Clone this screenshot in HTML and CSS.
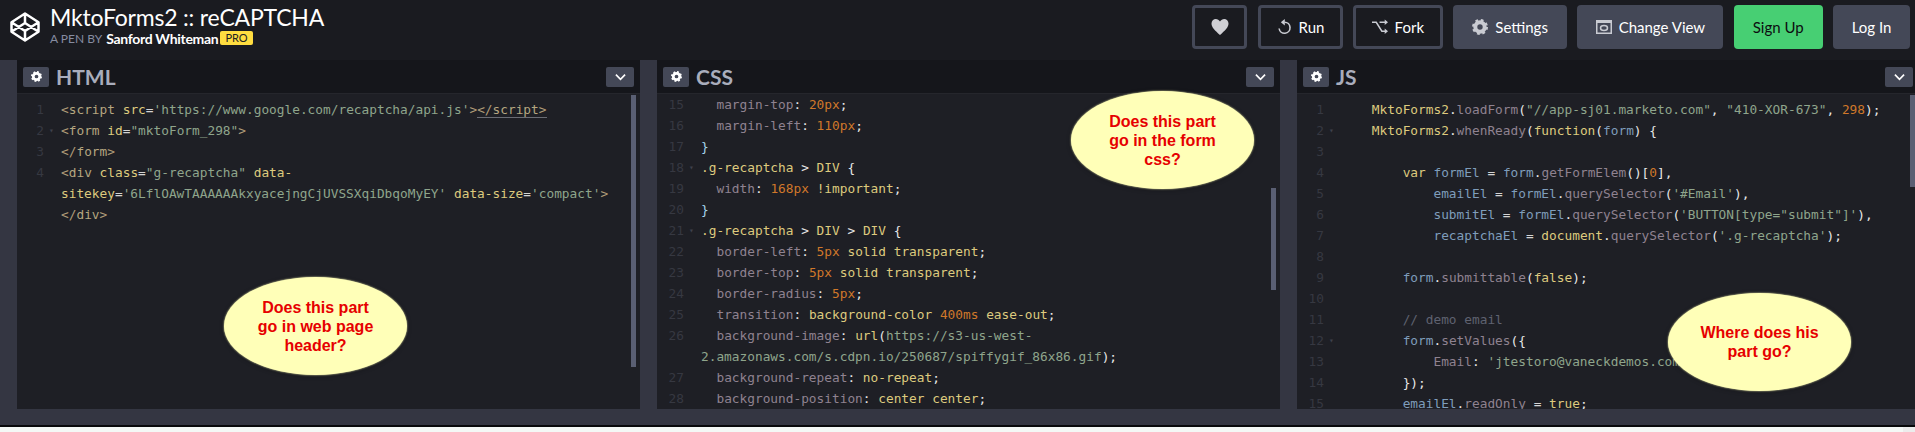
FILE: index.html
```html
<!DOCTYPE html>
<html lang="en">
<head>
<meta charset="utf-8">
<title>MktoForms2 :: reCAPTCHA</title>
<link rel="stylesheet" href="styles.css">
</head>
<body>
<div class="page">
<header class="topbar">
  <div class="brand">
    <svg class="logo" viewBox="0 0 30 30" aria-hidden="true"><path d="M15 1.500 28.500 10.200v9.600L15 28.500 1.500 19.800v-9.600zM1.500 10.200 15 19l13.500-8.800M1.500 19.800 15 11l13.500 8.800M15 1.500V11M15 19v9.500"/></svg>
    <div class="brand-text">
      <h1 class="pen-title">MktoForms2 :: reCAPTCHA</h1>
      <div class="pen-by"><span class="pen-label">A PEN BY</span> <span class="pen-author">Sanford Whiteman</span><span class="pro">PRO</span></div>
    </div>
  </div>
  <nav class="actions">
    <button class="btn btn-outline btn-heart"><svg class="ico ico-heart" viewBox="0 0 18 18"><path d="M9 17C4 12.500.5 9.500.5 5.500.5 2.800 2.500 1 4.800 1 6.500 1 8 1.900 9 3.500 10 1.900 11.500 1 13.200 1c2.300 0 4.300 1.800 4.300 4.500C17.500 9.500 14 12.500 9 17z"/></svg></button>
    <button class="btn btn-outline btn-run"><svg class="ico ico-line" viewBox="0 0 16 16"><path d="M8.500 3.200a5.500 5.500 0 1 1-5.400 6.300"/><path class="fill" d="M8.800 0v6.400L4.800 3.200z"/></svg>Run</button>
    <button class="btn btn-outline btn-fork"><svg class="ico ico-line" viewBox="0 0 17 16"><path d="M0 3h4.500l6 9.500H14M8 3h6"/><path class="fill" d="M13.500 0 17 3l-3.500 3zM13.500 9.500l3.500 3-3.500 3z"/></svg>Fork</button>
    <button class="btn btn-solid btn-settings"><svg class="ico ico-gear" viewBox="0 0 16 16"><circle class="gear-ring" cx="8" cy="8" r="4.700"/><circle class="gear-teeth" cx="8" cy="8" r="6.500"/></svg>Settings</button>
    <button class="btn btn-solid btn-view"><svg class="ico ico-view" viewBox="0 0 16 16"><path class="fill" d="M0 1h16v3H0z"/><rect x=".75" y="1.750" width="14.500" height="12.500"/><ellipse cx="8" cy="9" rx="3.500" ry="2.500"/></svg>Change View</button>
    <button class="btn btn-green btn-signup">Sign Up</button>
    <button class="btn btn-solid btn-login">Log In</button>
  </nav>
</header>

<main class="editors">
  <section class="pane">
    <div class="pane-head">
      <span class="pane-gear"><svg class="mini-gear" viewBox="0 0 16 16"><circle class="gear-ring" cx="8" cy="8" r="4.700"/><circle class="gear-teeth" cx="8" cy="8" r="6.500"/></svg></span>
      <h2 class="pane-title">HTML</h2>
      <span class="pane-toggle"><svg class="chev" viewBox="0 0 12 8"><path d="M1 1.500 6 6.500 11 1.500"/></svg></span>
    </div>
    <div class="code pad-html">
      <div class="scroll scroll-html"></div>
      <div class="ln"><span class="no">1</span><span class="tx"><i class="ang">&lt;</i><i class="tag">script</i> <i class="atr">src</i><i class="pn">=</i><i class="str">'https://www.google.com/recaptcha/api.js'</i><i class="ang">&gt;</i><span class="match"><i class="ang">&lt;/</i><i class="tag">script</i><i class="ang">&gt;</i></span></span></div>
      <div class="ln fold"><span class="no">2</span><span class="tx"><i class="ang">&lt;</i><i class="tag">form</i> <i class="atr">id</i><i class="pn">=</i><i class="str">"mktoForm_298"</i><i class="ang">&gt;</i></span></div>
      <div class="ln"><span class="no">3</span><span class="tx"><i class="ang">&lt;/</i><i class="tag">form</i><i class="ang">&gt;</i></span></div>
      <div class="ln"><span class="no">4</span><span class="tx"><i class="ang">&lt;</i><i class="tag">div</i> <i class="atr">class</i><i class="pn">=</i><i class="str">"g-recaptcha"</i> <i class="atr">data-
sitekey</i><i class="pn">=</i><i class="str">'6LflOAwTAAAAAAkxyacejngCjUVSSXqiDbqoMyEY'</i> <i class="atr">data-size</i><i class="pn">=</i><i class="str">'compact'</i><i class="ang">&gt;</i>
<i class="ang">&lt;/</i><i class="tag">div</i><i class="ang">&gt;</i></span></div>
    </div>
  </section>

  <section class="pane">
    <div class="pane-head">
      <span class="pane-gear"><svg class="mini-gear" viewBox="0 0 16 16"><circle class="gear-ring" cx="8" cy="8" r="4.700"/><circle class="gear-teeth" cx="8" cy="8" r="6.500"/></svg></span>
      <h2 class="pane-title">CSS</h2>
      <span class="pane-toggle"><svg class="chev" viewBox="0 0 12 8"><path d="M1 1.500 6 6.500 11 1.500"/></svg></span>
    </div>
    <div class="code pad-css">
      <div class="scroll scroll-css"></div>
      <div class="ln"><span class="no">15</span><span class="tx">  <i class="prop">margin-top</i><i class="pw">:</i> <i class="num">20px</i><i class="pw">;</i></span></div>
      <div class="ln"><span class="no">16</span><span class="tx">  <i class="prop">margin-left</i><i class="pw">:</i> <i class="num">110px</i><i class="pw">;</i></span></div>
      <div class="ln"><span class="no">17</span><span class="tx"><i class="brc">}</i></span></div>
      <div class="ln fold"><span class="no">18</span><span class="tx"><i class="kw">.g-recaptcha</i> <i class="pw">&gt;</i> <i class="kw">DIV</i> <i class="pw">{</i></span></div>
      <div class="ln"><span class="no">19</span><span class="tx">  <i class="prop">width</i><i class="pw">:</i> <i class="num">168px</i> <i class="kw">!important</i><i class="pw">;</i></span></div>
      <div class="ln"><span class="no">20</span><span class="tx"><i class="brc">}</i></span></div>
      <div class="ln fold"><span class="no">21</span><span class="tx"><i class="kw">.g-recaptcha</i> <i class="pw">&gt;</i> <i class="kw">DIV</i> <i class="pw">&gt;</i> <i class="kw">DIV</i> <i class="pw">{</i></span></div>
      <div class="ln"><span class="no">22</span><span class="tx">  <i class="prop">border-left</i><i class="pw">:</i> <i class="num">5px</i> <i class="kw">solid transparent</i><i class="pw">;</i></span></div>
      <div class="ln"><span class="no">23</span><span class="tx">  <i class="prop">border-top</i><i class="pw">:</i> <i class="num">5px</i> <i class="kw">solid transparent</i><i class="pw">;</i></span></div>
      <div class="ln"><span class="no">24</span><span class="tx">  <i class="prop">border-radius</i><i class="pw">:</i> <i class="num">5px</i><i class="pw">;</i></span></div>
      <div class="ln"><span class="no">25</span><span class="tx">  <i class="prop">transition</i><i class="pw">:</i> <i class="kw">background-color</i> <i class="num">400ms</i> <i class="kw">ease-out</i><i class="pw">;</i></span></div>
      <div class="ln"><span class="no">26</span><span class="tx">  <i class="prop">background-image</i><i class="pw">:</i> <i class="kw">url</i><i class="pw">(</i><i class="str">https://s3-us-west-
2.amazonaws.com/s.cdpn.io/250687/spiffygif_86x86.gif</i><i class="pw">);</i></span></div>
      <div class="ln"><span class="no">27</span><span class="tx">  <i class="prop">background-repeat</i><i class="pw">:</i> <i class="kw">no-repeat</i><i class="pw">;</i></span></div>
      <div class="ln"><span class="no">28</span><span class="tx">  <i class="prop">background-position</i><i class="pw">:</i> <i class="kw">center center</i><i class="pw">;</i></span></div>
    </div>
  </section>

  <section class="pane pane-js">
    <div class="pane-head">
      <span class="pane-gear"><svg class="mini-gear" viewBox="0 0 16 16"><circle class="gear-ring" cx="8" cy="8" r="4.700"/><circle class="gear-teeth" cx="8" cy="8" r="6.500"/></svg></span>
      <h2 class="pane-title">JS</h2>
      <span class="pane-toggle"><svg class="chev" viewBox="0 0 12 8"><path d="M1 1.500 6 6.500 11 1.500"/></svg></span>
    </div>
    <div class="code pad-js">
      <div class="scroll scroll-js"></div>
      <div class="ln"><span class="no">1</span><span class="tx">    <i class="kw">MktoForms2</i><i class="pw">.</i><i class="prop">loadForm</i><i class="pw">(</i><i class="str">"//app-sj01.marketo.com"</i><i class="pw">,</i> <i class="str">"410-XOR-673"</i><i class="pw">,</i> <i class="num">298</i><i class="pw">);</i></span></div>
      <div class="ln fold"><span class="no">2</span><span class="tx">    <i class="kw">MktoForms2</i><i class="pw">.</i><i class="prop">whenReady</i><i class="pw">(</i><i class="kw">function</i><i class="pw">(</i><i class="var">form</i><i class="pw">) {</i></span></div>
      <div class="ln"><span class="no">3</span><span class="tx"> </span></div>
      <div class="ln"><span class="no">4</span><span class="tx">        <i class="kw">var</i> <i class="var">formEl</i> <i class="pn">=</i> <i class="var">form</i><i class="pw">.</i><i class="prop">getFormElem</i><i class="pw">()[</i><i class="num">0</i><i class="pw">],</i></span></div>
      <div class="ln"><span class="no">5</span><span class="tx">            <i class="var">emailEl</i> <i class="pn">=</i> <i class="var">formEl</i><i class="pw">.</i><i class="prop">querySelector</i><i class="pw">(</i><i class="str">'#Email'</i><i class="pw">),</i></span></div>
      <div class="ln"><span class="no">6</span><span class="tx">            <i class="var">submitEl</i> <i class="pn">=</i> <i class="var">formEl</i><i class="pw">.</i><i class="prop">querySelector</i><i class="pw">(</i><i class="str">'BUTTON[type="submit"]'</i><i class="pw">),</i></span></div>
      <div class="ln"><span class="no">7</span><span class="tx">            <i class="var">recaptchaEl</i> <i class="pn">=</i> <i class="kw">document</i><i class="pw">.</i><i class="prop">querySelector</i><i class="pw">(</i><i class="str">'.g-recaptcha'</i><i class="pw">);</i></span></div>
      <div class="ln"><span class="no">8</span><span class="tx"> </span></div>
      <div class="ln"><span class="no">9</span><span class="tx">        <i class="var">form</i><i class="pw">.</i><i class="prop">submittable</i><i class="pw">(</i><i class="kw">false</i><i class="pw">);</i></span></div>
      <div class="ln"><span class="no">10</span><span class="tx"> </span></div>
      <div class="ln"><span class="no">11</span><span class="tx">        <i class="cm">// demo email</i></span></div>
      <div class="ln fold"><span class="no">12</span><span class="tx">        <i class="var">form</i><i class="pw">.</i><i class="prop">setValues</i><i class="pw">({</i></span></div>
      <div class="ln"><span class="no">13</span><span class="tx">            <i class="prop">Email</i><i class="pw">:</i> <i class="str">'jtestoro@vaneckdemos.com'</i></span></div>
      <div class="ln"><span class="no">14</span><span class="tx">        <i class="pw">});</i></span></div>
      <div class="ln"><span class="no">15</span><span class="tx">        <i class="var">emailEl</i><i class="pw">.</i><i class="prop">readOnly</i> <i class="pn">=</i> <i class="kw">true</i><i class="pw">;</i></span></div>
    </div>
  </section>

  <div class="bubble bubble-html">Does this part<br>go in web page<br>header?</div>
  <div class="bubble bubble-css">Does this part<br>go in the form<br>css?</div>
  <div class="bubble bubble-js">Where does his<br>part go?</div>
</main>
<footer class="statusbar"></footer>
<div class="page-edge"><span class="edge-corner"></span></div>
</div>
</body>
</html>
```

FILE: styles.css
```css
* { box-sizing: border-box; }
html, body { margin: 0; padding: 0; }
body { background: #f4f8f6; font-family: "Lato", "Liberation Sans", sans-serif; overflow: hidden; }
.page { display: flex; flex-direction: column; height: 432px; width: 1915px; }

.topbar { height: 60px; flex: none; background: #1a1b20; display: flex; justify-content: space-between; padding: 5px 5px 0 10px; align-items: flex-start; }
.brand { display: flex; gap: 10px; }
.logo { width: 30px; height: 30px; margin-top: 7px; fill: none; stroke: #fff; stroke-width: 2.500; stroke-linejoin: round; }
.brand-text { display: flex; flex-direction: column; }
.pen-title { margin: 0; font-weight: 400; font-size: 23px; line-height: 24px; color: #fff; letter-spacing: -.2px; }
.pen-by { display: flex; align-items: center; font-size: 12px; margin-top: 2px; height: 14px; }
.pen-label { color: #868ca0; margin-right: 4px; }
.pen-author { color: #fff; font-weight: 700; font-size: 14px; letter-spacing: -.3px; }
.pro { background: #ffdd40; color: #222; font-size: 11px; padding: 0 5px; height: 14px; line-height: 14px; border-radius: 2px; margin-left: 2px; }

.actions { display: flex; gap: 10.300px; }
.btn { height: 44px; border: 0; border-radius: 4px; padding: 0; display: flex; align-items: center; justify-content: center; gap: 7px; color: #fff; font: 400 15px "Lato", "Liberation Sans", sans-serif; }
.btn-outline { background: #1a1b20; border: 3px solid #444857; }
.btn-solid { background: #444857; }
.btn-green { background: #47cf73; color: #0c0d10; }
.btn-heart { width: 55px; }
.btn-run { width: 85px; }
.btn-fork { width: 90px; }
.btn-settings { width: 114px; }
.btn-view { width: 146px; }
.btn-signup { width: 89px; }
.btn-login { width: 77px; }
.ico { width: 16px; height: 16px; flex: none; }
.ico-heart { fill: #cfcfd4; width: 18px; height: 18px; }
.ico-line { fill: none; stroke: #c9cbd2; stroke-width: 1.600; }
.ico-line .fill { fill: #c9cbd2; stroke: none; }
.ico-view { fill: none; stroke: #c9cbd2; stroke-width: 1.500; }
.ico-view .fill { fill: #c9cbd2; stroke: none; }
.gear-ring { fill: none; stroke: #c9cbd2; stroke-width: 4; }
.gear-teeth { fill: none; stroke: #c9cbd2; stroke-width: 3; stroke-dasharray: 2.550 2.550; }

.editors { flex: 1; display: flex; position: relative; min-height: 0; background: #343642; padding-left: 17px; gap: 17px; }
.pane { width: 623px; flex: none; display: flex; flex-direction: column; background: #1e1f25; min-height: 0; }
.pane-js { width: 618px; }
.pane-head { height: 34px; flex: none; background: #15161b; border-bottom: 1px solid #25262c; display: flex; align-items: center; padding: 0 6px; margin: 0; }
.pane-js .pane-head { padding-right: 2px; }
.pane-gear { width: 26px; height: 20px; background: #444857; border-radius: 2px; display: flex; align-items: center; justify-content: center; }
.mini-gear { width: 11px; height: 11px; }
.mini-gear .gear-ring, .mini-gear .gear-teeth { stroke: #fff; }
.pane-title { margin: 0 0 0 7px; flex: 1; font-size: 21px; line-height: 34px; font-weight: 700; color: #a9adbc; }
.pane-toggle { width: 28px; height: 20px; background: #444857; border-radius: 2px; display: flex; align-items: center; justify-content: center; }
.chev { width: 11px; height: 8px; fill: none; stroke: #fff; stroke-width: 1.800; }

.code { flex: 1; min-height: 0; overflow: hidden; position: relative; font: 12.800px/21px "DejaVu Sans Mono", "Liberation Mono", monospace; }
.pad-html { padding-top: 5px; }
.pad-css { padding-top: 0; }
.pad-js { padding-top: 5px; }
.ln { display: flex; position: relative; }
.no { width: 27px; flex: none; text-align: right; color: #363841; }
.fold::after { content: "\25BE"; position: absolute; left: 32px; top: 0; font-size: 8px; color: #3f414b; }
.tx { margin-left: 17px; white-space: pre-wrap; }
.tx i { font-style: normal; }
.scroll { position: absolute; width: 5px; background: #5a5f73; }
.scroll-html { right: 4px; top: 1px; height: 272px; }
.scroll-css { right: 4px; top: 94px; height: 102px; }
.scroll-js { right: 0; top: 1px; height: 92px; }

.ang { color: #b09c78; }
.tag { color: #b5a680; }
.atr { color: #ddca7e; }
.pn { color: #d5d5d5; }
.str { color: #8fa58c; }
.prop { color: #8f8290; }
.pw { color: #e8e8e8; }
.num { color: #d0782a; }
.kw { color: #ddca7e; }
.brc { color: #a5d5ee; }
.var { color: #7f9dbb; }
.cm { color: #5f6270; }
.match { border-bottom: 1px solid #6a6c74; }

.bubble { position: absolute; width: 183px; height: 98px; border-radius: 50%; background: #ffffb8; box-shadow: 0 0 2px #ffffb8, 0 1px 5px rgba(0, 0, 0, .3); color: #e60000; display: flex; align-items: center; justify-content: center; text-align: center; font: 700 16px/19px "Liberation Sans", Arial, sans-serif; }
.bubble-html { left: 224px; top: 217px; }
.bubble-css { left: 1071px; top: 31px; }
.bubble-js { left: 1668px; top: 233px; }

.statusbar { height: 18px; flex: none; background: #343642; border-bottom: 2px solid #08090b; }
.page-edge { height: 5px; flex: none; display: flex; justify-content: flex-end; }
.edge-corner { width: 12px; background: #ececec; }
```
